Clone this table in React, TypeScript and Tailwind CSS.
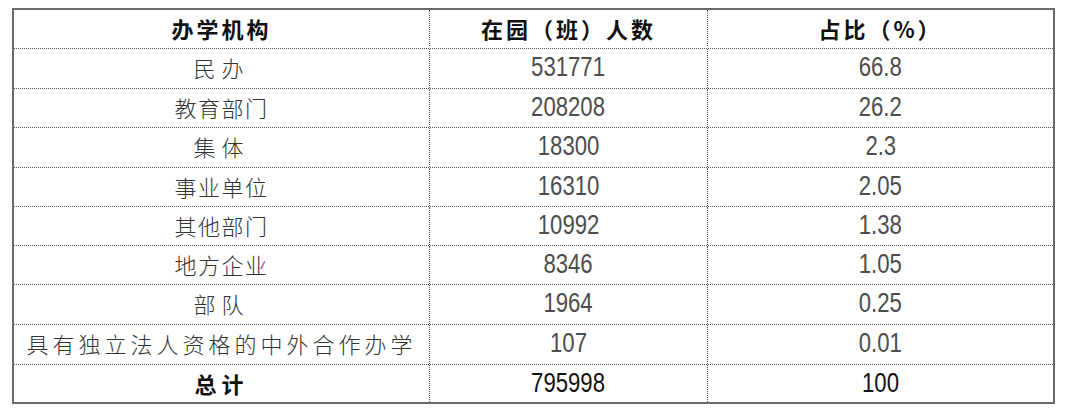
import React from 'react';

const rows = [
  { name: '民办', count: '531771', pct: '66.8', h: 'h-[40px]', track: 'tracking-[6px]' },
  { name: '教育部门', count: '208208', pct: '26.2', h: 'h-[39px]', track: 'tracking-[1.5px]' },
  { name: '集体', count: '18300', pct: '2.3', h: 'h-[40px]', track: 'tracking-[6px]' },
  { name: '事业单位', count: '16310', pct: '2.05', h: 'h-[39px]', track: 'tracking-[1.5px]' },
  { name: '其他部门', count: '10992', pct: '1.38', h: 'h-[39px]', track: 'tracking-[1.5px]' },
  { name: '地方企业', count: '8346', pct: '1.05', h: 'h-[39px]', track: 'tracking-[1.5px]' },
  { name: '部队', count: '1964', pct: '0.25', h: 'h-[40px]', track: 'tracking-[6px]' },
  { name: '具有独立法人资格的中外合作办学', count: '107', pct: '0.01', h: 'h-[40px]', track: 'tracking-[4px]' },
];

const cjk = "font-['Noto_Sans_CJK_SC',sans-serif] whitespace-nowrap";
const num = "inline-block scale-x-[0.82] font-['Liberation_Sans',Arial,sans-serif] text-[27px] leading-none";

export default function App() {
  return (
    <div className="w-[1080px] h-[418px] bg-white pl-[12px] pt-[8px]">
      <div className="w-[1043px] border-2 border-[#6a6a6a] flex flex-col">
        {/* header */}
        <div className="flex h-[39px] pb-[2px] border-b border-dotted border-[#555]">
          <div className={`w-[416px] border-r border-dotted border-[#555] flex items-center justify-center ${cjk} text-[22px] font-bold text-[#111] tracking-[3px]`}>
            办学机构
          </div>
          <div className={`w-[278px] border-r border-dotted border-[#555] flex items-center justify-center ${cjk} text-[22px] font-bold text-[#111] tracking-[3px]`}>
            在园（班）人数
          </div>
          <div className={`flex-1 flex items-center justify-center ${cjk} text-[22px] font-bold text-[#111] tracking-[3px]`}>
            占比（%）
          </div>
        </div>

        {rows.map((r) => (
          <div key={r.name} className={`flex ${r.h} border-b border-dotted border-[#555]`}>
            <div className={`w-[416px] pb-[2px] border-r border-dotted border-[#555] flex items-center justify-center ${cjk} text-[22px] font-light text-[#333] ${r.track}`}>
              {r.name}
            </div>
            <div className="w-[278px] pb-[2px] border-r border-dotted border-[#555] flex items-center justify-center text-[#4d4d4d]">
              <span className={num}>{r.count}</span>
            </div>
            <div className="flex-1 pb-[2px] flex items-center justify-center text-[#4d4d4d]">
              <span className={num}>{r.pct}</span>
            </div>
          </div>
        ))}

        {/* total */}
        <div className="flex h-[37px]">
          <div className={`w-[416px] border-r border-dotted border-[#555] flex items-center justify-center ${cjk} text-[22px] font-bold text-[#111] tracking-[5px]`}>
            总计
          </div>
          <div className="w-[278px] border-r border-dotted border-[#555] flex items-center justify-center text-[#111]">
            <span className={num}>795998</span>
          </div>
          <div className="flex-1 flex items-center justify-center text-[#111]">
            <span className={num}>100</span>
          </div>
        </div>
      </div>
    </div>
  );
}
